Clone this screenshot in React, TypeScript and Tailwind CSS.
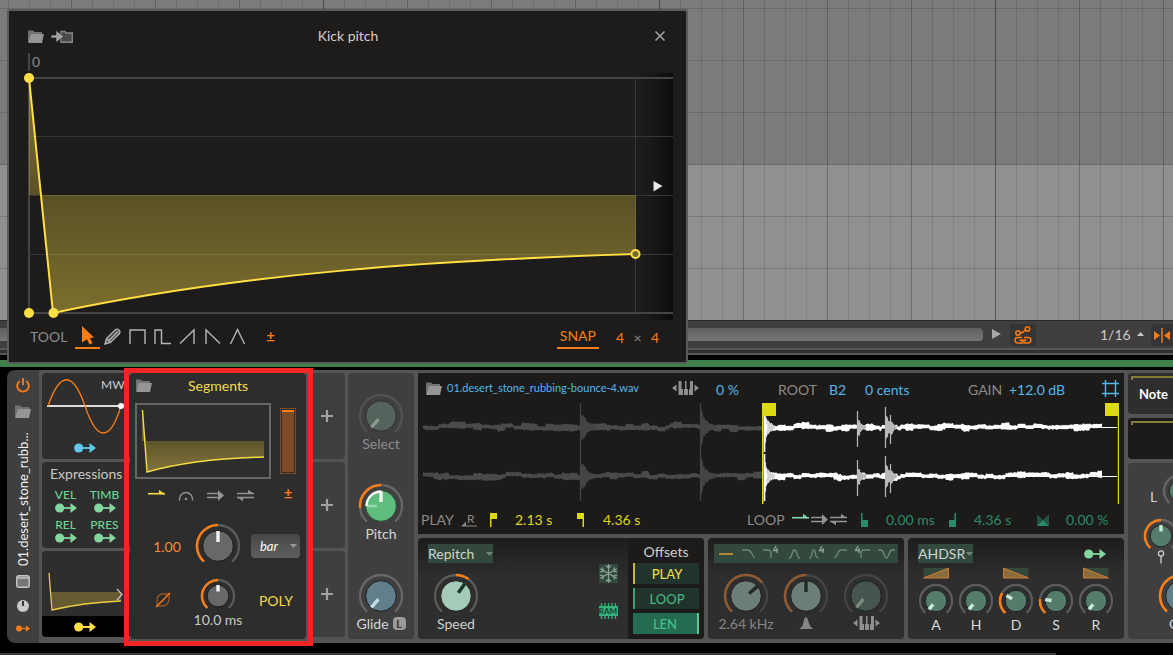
import type { ReactNode } from "react";

/* ---------- helpers ---------- */

function polar(c: number, r: number, deg: number) {
  const a = ((deg - 90) * Math.PI) / 180;
  return `${(c + r * Math.cos(a)).toFixed(2)} ${(c + r * Math.sin(a)).toFixed(2)}`;
}

function arc(c: number, r: number, from: number, to: number) {
  return `M${polar(c, r, from)}A${r} ${r} 0 ${to - from > 180 ? 1 : 0} 1 ${polar(c, r, to)}`;
}

// cheap repeatable noise, -1..1
function noise(n: number) {
  const v = Math.sin(n * 127.1 + 311.7) * 43758.5453;
  return (v - Math.floor(v)) * 2 - 1;
}

function wavePath(from: number, to: number, mid: number, seed: number) {
  const top: string[] = [];
  const bottom: string[] = [];
  for (let x = from; x <= to; x++) {
    const k = Math.floor(x / 8);
    const swell = noise(k + seed) * 1.1 + noise(Math.floor(x / 21) + seed * 3) * 1.1;
    const half = 1.5 + Math.abs(noise(x + seed * 7)) * 1 + (noise(k * 3 + seed) > 0.4 ? 1.3 : 0);
    top.push(`${x} ${(mid + swell - half).toFixed(1)}`);
    bottom.unshift(`${x} ${(mid + swell + half).toFixed(1)}`);
  }
  return `M${top.join("L")}L${bottom.join("L")}Z`;
}

// a transient: one or two full-height columns, then a ragged decay
function hitPath(x: number, mid: number, up: number, down: number, length: number) {
  let d = "";
  for (let i = 0; i < length; i++) {
    const fall = i === 0 ? 1 : 0.85 * Math.exp(-i / (length / 2.4)) * (0.6 + 0.4 * Math.abs(noise(x + i)));
    d += `M${x + i + 0.5} ${(mid - up * fall).toFixed(1)}V${(mid + down * fall).toFixed(1)}`;
  }
  return d;
}

/* ---------- icons ---------- */

function FolderIcon() {
  return (
    <svg width="16" height="13" viewBox="0 0 16 13">
      <path d="M0 .5h5l1.500 1.500H14V4.500H4L1 12H0z" fill="#717171" />
      <path d="M2.800 4h13.200L14 13H.3z" fill="#959595" />
    </svg>
  );
}

function LinkArrow({ color, small }: { color: string; small?: boolean }) {
  return (
    <svg width={small ? 14 : 22} height={small ? 7 : 10} viewBox="0 0 22 10">
      <circle cx="4.700" cy="5" r="4.600" fill={color} />
      <path d="M8 5h9" stroke={color} strokeWidth="1.800" />
      <path d="M15.500 0L22 5l-6.500 5z" fill={color} />
    </svg>
  );
}

function OneShotIcon({ color }: { color: string }) {
  return (
    <svg width="17" height="13" viewBox="0 0 17 13">
      <path d="M0 4.700h17" stroke={color} strokeWidth="1.600" />
      <path d="M11 .8l6 4.500h-6z" fill={color} />
    </svg>
  );
}

function HoldIcon() {
  return (
    <svg width="16" height="13" viewBox="0 0 16 13" fill="none">
      <path d="M1.500 11.500V10a6.500 6.500 0 0 1 13 0v1.500" stroke="#949494" strokeWidth="1.400" />
      <circle cx="8" cy="10" r="1.300" fill="#949494" />
    </svg>
  );
}

function LoopIcon() {
  return (
    <svg width="17" height="13" viewBox="0 0 17 13">
      <path d="M0 4.500h13M0 8.500h13" stroke="#949494" strokeWidth="1.400" />
      <path d="M11 1l6 5.500-6 5.500z" fill="#949494" />
    </svg>
  );
}

function PingPongIcon() {
  return (
    <svg width="17" height="13" viewBox="0 0 17 13" fill="#949494">
      <path d="M0 4.500h17M0 8.500h17" stroke="#949494" strokeWidth="1.400" />
      <path d="M11 .8l6 4.200h-6zM6 12.200L0 8h6z" />
    </svg>
  );
}

function KeysIcon() {
  return (
    <svg width="27" height="14" viewBox="0 0 27 14" fill="#8f8f8f">
      <path d="M4.500 3.500v7L0 7zM22.500 3.500v7L27 7z" />
      <path d="M6.500 0h3v8h1.500v6H6.500zM12 8h1V0h1.500v8h1.500v6H12zM17 8h1V0h3v14H17z" />
    </svg>
  );
}

function FlagIcon({ color, side }: { color: string; side: "left" | "right" }) {
  return (
    <svg width="7" height="14" viewBox="0 0 7 14" fill={color}>
      {side === "left" ? <path d="M0 0h7v6H1.500v8H0z" /> : <path d="M7 0H0v6h5.500v8H7z" />}
    </svg>
  );
}

function LoopFlagIcon({ side }: { side: "left" | "right" }) {
  return (
    <svg width="7" height="14" viewBox="0 0 7 14" fill="#2a8a6a">
      {side === "left" ? <path d="M0 0h1.500v7H7v7H0z" /> : <path d="M7 0H5.500v7H0v7h7z" />}
    </svg>
  );
}

function Triangle({ dir, color = "#9a9a9a" }: { dir: "up" | "down"; color?: string }) {
  return (
    <svg width="7" height="4" viewBox="0 0 7 4" fill={color} className="shrink-0">
      {dir === "up" ? <path d="M0 4h7L3.500 0z" /> : <path d="M0 0h7L3.500 4z" />}
    </svg>
  );
}

/* ---------- knob ---------- */

type KnobProps = {
  label: string;
  caption?: ReactNode;
  size?: "lg" | "sm";
  disc: string;
  edge?: string;
  pointer?: string;
  angle: number;
  range?: [number, number];
  ring?: string;
  accent?: string;
  className?: string;
  children?: ReactNode;
};

function Knob({
  label,
  caption,
  size = "lg",
  disc,
  edge = "#1f1f1f",
  pointer = "#f2f2f2",
  angle,
  range,
  ring = "#5a5a5a",
  accent = "#f97d17",
  className = "",
  children,
}: KnobProps) {
  const lg = size === "lg";
  const c = lg ? 24 : 18;
  const r = lg ? 21 : 16;
  return (
    <label className={`relative flex flex-col items-center ${className}`}>
      <svg width={c * 2} height={lg ? 42 : 32} viewBox={`0 0 ${c * 2} ${lg ? 42 : 32}`} fill="none" className="shrink-0">
        <path d={arc(c, r, -138, 138)} stroke={ring} strokeWidth="2.300" />
        {range && <path d={arc(c, r, range[0], range[1])} stroke={accent} strokeWidth="2.500" />}
        <circle cx={c} cy={c} r={lg ? 15.3 : 10.8} fill={disc} stroke={edge} strokeWidth="1" />
        <path d={`M${polar(c, lg ? 4 : 4.5, angle)}L${polar(c, lg ? 15 : 11, angle)}`} stroke={pointer} strokeWidth="3.400" />
        {children}
      </svg>
      {caption && <span className="flex h-[18px] items-center gap-1 whitespace-nowrap text-[14px]">{caption}</span>}
      <input type="range" aria-label={label} className="absolute inset-0 h-full w-full opacity-0" />
    </label>
  );
}

/* ---------- envelope editor window ---------- */

const CURVE = "M20 5L44 240C238 199 433 187 627 181";

function ShapeTool({ label, d }: { label: string; d: string }) {
  return (
    <button aria-label={label} className="flex h-[25px] w-[25px] items-center justify-center">
      <svg width="17" height="17" viewBox="0 0 17 17" fill="none" stroke="#b5b5b5" strokeWidth="1.400">
        <path d={d} />
      </svg>
    </button>
  );
}

function EnvelopeWindow() {
  return (
    <section className="absolute left-[7px] top-[9px] z-10 w-[681px] rounded-[3px] border-2 border-[#5b5b5b] bg-[#1d1c1b]">
      <header className="flex h-[42px] items-center pl-[19px] pr-[21px] pt-2">
        <button aria-label="Open preset" className="w-[23px]"><FolderIcon /></button>
        <button aria-label="Import" className="w-6">
          <svg width="22" height="13" viewBox="0 0 22 13">
            <path d="M10 1.500h4l1 1.500h6.300v9.300H10z" fill="#4a4a4a" stroke="#858585" strokeWidth="1.400" />
            <path d="M0 5h5V.5l8 6-8 6V8H0z" fill="#a0a0a0" stroke="#1d1c1b" strokeWidth=".6" />
          </svg>
        </button>
        <h2 className="flex-1 pr-6 text-center text-[14px] leading-5 text-[#d0d0d0]">Kick pitch</h2>
        <button aria-label="Close" className="flex w-5 justify-end">
          <svg width="10" height="10" viewBox="0 0 10 10" stroke="#a5a5a5" strokeWidth="1.500">
            <path d="M.5.5l9 9M9.500.5l-9 9" />
          </svg>
        </button>
      </header>

      <div className="flex h-5 items-start pl-[19px]">
        <div className="h-[18px] border-l-2 border-[#444] pl-[2px] text-[14px] leading-[18px] text-[#8a8a8a]">0</div>
      </div>
      <svg width="677" height="247" viewBox="0 0 677 247" fill="none" className="block">
        <defs>
          <linearGradient id="fill-env" x1="0" y1="5" x2="0" y2="240" gradientUnits="userSpaceOnUse">
            <stop offset="0" stopColor="#ffdf45" stopOpacity=".45" />
            <stop offset=".5" stopColor="#ffdf45" stopOpacity=".27" />
            <stop offset="1" stopColor="#ffdf45" stopOpacity=".42" />
          </linearGradient>
          <linearGradient id="edge-shade">
            <stop offset="0" stopColor="#101012" stopOpacity="0" />
            <stop offset="1" stopColor="#0a0a0a" stopOpacity=".9" />
          </linearGradient>
        </defs>
        <rect x="632" y="0" width="32" height="247" fill="url(#edge-shade)" />
        <path d="M20 5h644M20 240h644M20 5v235" stroke="#464546" strokeWidth="2" />
        <path d="M20 63.500h644M20 122.500h644M20 181.500h644M626.500 5v235" stroke="#383738" />
        <path d={`${CURVE}V122H20Z`} fill="url(#fill-env)" fillRule="evenodd" />
        <path d={CURVE} stroke="#ffdf45" strokeWidth="2" />
        <circle cx="20" cy="5" r="5" fill="#ffdf45" />
        <circle cx="20" cy="240" r="5" fill="#ffdf45" />
        <circle cx="44.500" cy="240" r="5" fill="#ffdf45" />
        <circle cx="626.500" cy="181" r="4" fill="#75682f" stroke="#ffdf45" strokeWidth="2" />
        <path d="M644.500 108l9 5-9 5.500z" fill="#e8e8e8" />
      </svg>

      <footer className="flex h-[42px] items-start pl-[21px] pt-1 text-[14px] text-[#8c8c8c]">
        <span className="w-[45px] leading-[25px]">TOOL</span>
        <button aria-label="Select tool" className="flex h-[25px] w-[25px] items-center justify-center border-b-2 border-[#f97d17]">
          <svg width="12" height="19" viewBox="0 0 12 19" fill="#f97d17">
            <path d="M0 0l12 11.500-4 .5 2.500 5.200L7.500 18.600 5 13.200 0 16.500z" />
          </svg>
        </button>
        <button aria-label="Pencil tool" className="flex h-[25px] w-[25px] items-center justify-center">
          <svg width="17" height="17" viewBox="0 0 17 17" fill="#4c4c4c" stroke="#b5b5b5" strokeWidth="1.300">
            <path d="M1 16l1.500-5.500L11.500 1.500q2-1 3.500.5t.5 3.500L6.500 14.500zM2.500 10.500l4 4M5 12.500l9-9" />
          </svg>
        </button>
        <ShapeTool label="Square" d="M1 16V2h15v14" />
        <ShapeTool label="Pulse" d="M1 16V2h6.500v13.500H17" />
        <ShapeTool label="Saw up" d="M1 15.500L15 2v14" />
        <ShapeTool label="Saw down" d="M2 16V2l14 13.500" />
        <ShapeTool label="Triangle" d="M1.500 16L8.500 1.500 15.500 16" />
        <button className="ml-2 h-6 w-[25px] text-[15px] font-bold text-[#f97d17]">±</button>
        <button className="ml-auto mr-[17px] h-[25px] border-b-2 border-[#f97d17] px-[3px] text-[#f97d17]">SNAP</button>
        <span className="mr-[27px] flex w-[43px] justify-between leading-[27px]">
          <b className="font-normal text-[#f97d17]">4</b>×<b className="font-normal text-[#f97d17]">4</b>
        </span>
      </footer>
    </section>
  );
}

/* ---------- arranger ---------- */

function Arranger() {
  return (
    <div className="relative min-h-[320px] flex-1">
      <svg className="absolute inset-0 h-full w-full">
        <defs>
          <pattern id="beats" width="336" height="52" patternUnits="userSpaceOnUse" x="323" y="8">
            <path
              d="M21.500 0v52M42.500 0v52M63.500 0v52M105.500 0v52M126.500 0v52M147.500 0v52M189.500 0v52M210.500 0v52M231.500 0v52M273.500 0v52M294.500 0v52M315.500 0v52"
              stroke="#000"
              strokeOpacity=".1"
            />
            <path d="M84.500 0v52M168.500 0v52M252.500 0v52" stroke="#000" strokeOpacity=".24" />
            <path d="M.5 0v52" stroke="#000" strokeOpacity=".4" />
            <path d="M0 .5h336" stroke="#000" strokeOpacity=".14" />
          </pattern>
        </defs>
        <rect width="100%" height="100%" fill="#918f90" />
        <rect width="100%" height="165" fill="#7b7b7b" />
        <rect width="100%" height="100%" fill="url(#beats)" />
      </svg>
    </div>
  );
}

function ArrangerBar() {
  return (
    <div className="flex h-[30px] items-start overflow-hidden border-b-2 border-t border-b-[#575757] border-t-[#2b2b2b] bg-[#403e3f] text-[14px] text-[#c9c9c9]">
      <div className="mt-[7px] h-[13px] flex-1 rounded-r bg-linear-to-b from-[#5e5e5e] to-[#777]" />
      <button aria-label="Scroll right" className="ml-[9px] mt-[8px]">
        <svg width="9" height="10" viewBox="0 0 9 10" fill="#a8a8a8"><path d="M0 0l9 5-9 5z" /></svg>
      </button>
      <button aria-label="Follow automation" className="ml-[9px] mt-[3px] flex h-[22px] w-[26px] items-center justify-center rounded bg-[#353334]">
        <svg width="18" height="18" viewBox="0 0 18 18" fill="none" stroke="#f97d17" strokeWidth="1.500">
          <circle cx="4" cy="7" r="2.200" />
          <circle cx="13.500" cy="3" r="2.200" />
          <path d="M6 6.500q2 1 3.500-.8t2-2.200M8 11.500H3.800a2.700 2.700 0 0 0 0 5.400H8v-2M10 11.500h4.200a2.700 2.700 0 0 1 0 5.400H10v-2M5.500 14.200h7" />
        </svg>
      </button>
      <label className="ml-16 mt-[3px] flex h-5 w-[51px] items-center">
        <select aria-label="Grid" className="w-[37px] appearance-none bg-transparent text-[14px] outline-none">
          <option>1/16</option>
        </select>
        <Triangle dir="up" color="#c9c9c9" />
      </label>
      <button aria-label="Snap" className="mt-[3px] flex h-[22px] w-[22px] items-center justify-center rounded-l bg-[#353334]">
        <svg width="16" height="15" viewBox="0 0 16 15" fill="#f97d17">
          <path d="M0 3l6 4.500L0 12zM16 3l-6 4.500L16 12zM7.300 0h1.400v15H7.300z" />
        </svg>
      </button>
    </div>
  );
}

/* ---------- device: left side ---------- */

function DeviceHeader() {
  return (
    <div className="flex w-8 shrink-0 flex-col items-center rounded-l-lg bg-[#403f40]">
      <button aria-label="Power" className="mt-2">
        <svg width="14" height="15" viewBox="0 0 14 15" fill="none" stroke="#f97d17" strokeWidth="1.900">
          <path d="M7 0v7M3.800 3a5.800 5.800 0 1 0 6.400 0" />
        </svg>
      </button>
      <button aria-label="Browse" className="mt-3"><FolderIcon /></button>
      <span className="mt-[14px] h-[134px] rotate-180 whitespace-nowrap text-[13px] leading-5 text-[#f0f0f0] [writing-mode:vertical-rl]">
        01.desert_stone_rubb...
      </span>
      <button aria-label="Expand" className="mt-[9px]">
        <svg width="14" height="13" viewBox="0 0 14 13" fill="none">
          <rect x=".8" y=".8" width="12.400" height="11.400" rx="2" fill="#767676" stroke="#c4c4c4" strokeWidth="1.500" />
          <path d="M1 3h12" stroke="#c4c4c4" strokeWidth="1.500" />
        </svg>
      </button>
      <button aria-label="Remote controls" className="mt-[12px]">
        <svg width="12" height="12" viewBox="0 0 12 12">
          <circle cx="6" cy="6" r="6" fill="#c9c9c9" />
          <path d="M6 1v5" stroke="#3a3a3a" strokeWidth="2" />
        </svg>
      </button>
      <button aria-label="Modulators" className="mt-[13px]"><LinkArrow color="#f97d17" small /></button>
    </div>
  );
}

const EXPRESSIONS = ["VEL", "TIMB", "REL", "PRES"];

function Modulators() {
  return (
    <div className="flex w-[88px] shrink-0 flex-col gap-[3px]">
      <div className="relative h-[86px] rounded bg-[#2e2e2e]">
        <svg width="88" height="66" viewBox="0 0 88 66" fill="none" className="block">
          <path d="M5 33h75" stroke="#dcdcdc" strokeWidth="1.800" />
          <path d="M6 33C18-2 31-2 43 33C55 69 68 69 79 33" stroke="#f97d17" strokeWidth="1.300" />
          <circle cx="79" cy="33" r="3" fill="#fff" />
        </svg>
        <span className="absolute left-[59px] top-1 text-[12px] leading-4 text-[#d0d0d0]">MW</span>
        <button aria-label="Map MW" className="ml-8 mt-[4px] block"><LinkArrow color="#62c9ee" /></button>
      </div>
      <div className="h-[86px] rounded bg-[#2e2e2e] pt-[3px]">
        <h3 className="pl-2 text-[14px] leading-[18px] text-[#c9c9c9]">Expressions</h3>
        <div className="grid w-[82px] grid-cols-2 pl-1 pt-1">
          {EXPRESSIONS.map((name) => (
            <button key={name} className="flex h-[30px] flex-col items-center text-[12px] font-medium leading-4 text-[#6fd397]">
              {name}
              <LinkArrow color="#84d69f" />
            </button>
          ))}
        </div>
      </div>
      <div className="h-[86px] overflow-hidden rounded bg-[#2e2e2e]">
        <svg width="88" height="65" viewBox="0 0 88 65" fill="none" className="block">
          <path d="M9 41L10.500 59C35 53 55 52 79 50V41Z" fill="#655a30" />
          <path d="M7 22L10 59C35 53 55 51 79 50" stroke="#e9ce45" strokeWidth="1.300" />
          <path d="M75 38l5 5.500-5 5.500" stroke="#c5c5c5" strokeWidth="1.300" />
        </svg>
        <button aria-label="Map segments" className="flex h-[21px] w-full items-center bg-black pl-8"><LinkArrow color="#ffdf45" /></button>
      </div>
    </div>
  );
}

function SegmentsPanel() {
  return (
    <div className="relative w-[176px] shrink-0 rounded bg-[#2d2d2d]">
      <div className="pointer-events-none absolute -bottom-[7px] -left-[6px] -right-[7px] -top-[5px] z-10 border-[5px] border-[#f02524]" />
      <header className="flex h-6 items-center pl-[6px]">
        <button aria-label="Open preset"><FolderIcon /></button>
        <h3 className="flex-1 pr-[22px] text-center text-[14px] text-[#f4dc47]">Segments</h3>
      </header>
      <div className="flex items-center pl-[5px] pt-[6px]">
        <div className="h-[76px] w-[136px] border-2 border-[#676767]">
          <svg width="132" height="72" viewBox="0 0 132 72" fill="none" className="block">
            <defs>
              <linearGradient id="mini-env" x1="0" y1="0" x2="0" y2="1">
                <stop offset="0" stopColor="#5f552f" />
                <stop offset="1" stopColor="#82743a" />
              </linearGradient>
            </defs>
            <path d="M5 6L9 36H5Z" fill="#6a5f30" />
            <path d="M8 36L10 67C45 57 85 53 127 52V36Z" fill="url(#mini-env)" />
            <path d="M5.500 5L10 67C45 57 85 53 127 52" stroke="#f4dc47" strokeWidth="1.400" />
          </svg>
        </div>
        <label className="relative ml-[9px] h-[66px] w-4 border border-[#7c4c29] p-px">
          <span className="block h-full border-t-2 border-[#f97d17] bg-[#7c4c29]" />
          <input type="range" aria-label="Amount" className="absolute inset-0 h-full w-full opacity-0" />
        </label>
      </div>
      <div className="flex h-8 items-center pl-3 text-[15px] text-[#f97d17]">
        <button aria-label="One shot" className="flex w-[29px] justify-center"><OneShotIcon color="#f4dc47" /></button>
        <button aria-label="Hold" className="flex w-[29px] justify-center"><HoldIcon /></button>
        <button aria-label="Loop" className="flex w-[30px] justify-center"><LoopIcon /></button>
        <button aria-label="Ping-pong" className="flex w-[30px] justify-center"><PingPongIcon /></button>
        <button className="ml-[18px] w-5 pb-1 font-bold">±</button>
      </div>
      <div className="mt-[11px] flex h-12 items-center pl-2.5">
        <span className="flex-1 text-center text-[14px] text-[#f18d3c]">1.00</span>
        <Knob label="Time" disc="#686868" angle={0} range={[-138, 0]} className="h-12" />
        <div className="w-16">
          <label className="ml-[9px] flex h-6 w-[49px] items-center rounded bg-linear-to-b from-[#484848] to-[#5e5e5e]">
            <select aria-label="Time unit" className="w-[39px] appearance-none bg-transparent pl-[9px] pt-[2px] text-[13px] italic text-white outline-none">
              <option>bar</option>
            </select>
            <Triangle dir="down" />
          </label>
        </div>
      </div>
      <div className="mt-2 flex h-[52px] pl-2.5">
        <button aria-label="Phase" className="flex flex-1 items-center justify-center pb-2 pr-2">
          <svg width="16" height="16" viewBox="0 0 16 16" fill="none" stroke="#9c5626" strokeWidth="1.300">
            <path d="M2 13.500V7Q3 2 8.500 2H14v6Q13 14 7 14H2" />
            <path d="M1 15L15 1" stroke="#f97d17" strokeWidth="1.500" />
          </svg>
        </button>
        <Knob
          label="Smoothing"
          size="sm"
          disc="#686868"
          angle={0}
          range={[-138, 0]}
          className="w-12"
          caption={<span className="text-[#c9c9c9]">10.0 ms</span>}
        />
        <button className="h-[44px] w-16 pl-1 text-[14px] text-[#f4dc47]">POLY</button>
      </div>
    </div>
  );
}

function EmptySlots() {
  return (
    <div className="flex w-9 shrink-0 flex-col gap-[3px]">
      {[0, 1, 2].map((i) => (
        <button key={i} aria-label="Add modulator" className="flex h-[86px] items-center justify-center rounded bg-[#403f40]">
          <svg width="12" height="12" viewBox="0 0 12 12" stroke="#a2a2a2" strokeWidth="2.200">
            <path d="M6 0v12M0 6h12" />
          </svg>
        </button>
      ))}
    </div>
  );
}

function MacroKnobs() {
  return (
    <div className="flex w-[66px] shrink-0 flex-col gap-[30px] rounded bg-[#403f40] pt-[19px] text-[#d5d5d5]">
      <Knob
        label="Select"
        disc="#56625c"
        pointer="#8b988f"
        angle={-140}
        ring="#525152"
        edge="#2b2d2c"
        caption={<span className="text-[#8d8d8d]">Select</span>}
      />
      <Knob label="Pitch" disc="#60bd80" edge="#2e5a3e" angle={0} range={[-95, 0]} ring="#666" caption="Pitch">
        <path d="M20 24H10" stroke="#9bd8ae" strokeWidth="2.500" />
        <path d={arc(24, 14.5, -90, 0)} stroke="#fff" strokeWidth="2.300" />
      </Knob>
      <Knob
        label="Glide"
        disc="#607f8a"
        pointer="#c3dfe6"
        angle={-140}
        ring="#666"
        caption={
          <>
            Glide
            <kbd className="flex h-[13px] w-[13px] items-center justify-center rounded bg-[#9b9b9b] font-sans text-[11px] font-bold leading-none text-[#403f40]">L</kbd>
          </>
        }
      />
    </div>
  );
}

/* ---------- device: sampler ---------- */

const GREY_HITS = [162, 282];
const WHITE_HITS = [
  { x: 439, up: 16, down: 20, length: 9 },
  { x: 467, up: 20, down: 21, length: 10 },
  { x: 472, up: 12, down: 17, length: 7 },
];
const CHANNELS = [24, 73];

function Waveform() {
  return (
    <svg width="100%" height="101" viewBox="0 0 706 101" preserveAspectRatio="none" className="block">
      {CHANNELS.map((mid) => (
        <g key={mid}>
          <path d={wavePath(5, 344, mid, mid)} fill="#4b4a4a" />
          {GREY_HITS.map((x) => (
            <path key={x} d={hitPath(x, mid, 24, 25, 16)} stroke="#454444" strokeWidth="1.200" />
          ))}
          <path d={wavePath(346, 684, mid, mid + 2)} fill="#fff" />
          <path d={`M346 ${mid}.5H699`} stroke="#fff" />
          {WHITE_HITS.map((hit) => (
            <path key={hit.x} d={hitPath(hit.x, mid, hit.up, hit.down, hit.length)} stroke="#b9b8b8" strokeWidth="1.200" />
          ))}
          <path d={hitPath(346, mid, 22, 25, 11)} stroke="#d4d4d4" strokeWidth="1.200" />
          <path d={hitPath(346, mid, 22, 25, 3)} stroke="#fff" strokeWidth="1.600" />
        </g>
      ))}
      <path d="M344 0h14v13h-12.500v88H344z" fill="#dcda10" />
      <path d="M687 0h14v101h-1.200V13H687z" fill="#dcda10" />
    </svg>
  );
}

function SamplerDisplay() {
  return (
    <div className="overflow-hidden bg-[#1c1b1a] text-[14px] text-[#8c8a88]">
      <div className="flex h-[30px] items-center whitespace-nowrap pl-2 pr-[5px] *:shrink-0">
        <button aria-label="Open sample" className="w-[21px]"><FolderIcon /></button>
        <span className="w-[225px] text-[11px] text-[#55b7e8]">01.desert_stone_rubbing-bounce-4.wav</span>
        <span className="w-11"><KeysIcon /></span>
        <span className="w-[62px] pt-0.5 text-[#55b7e8]">0 %</span>
        <span className="w-[51px] pt-0.5">ROOT</span>
        <span className="w-9 pt-0.5 text-[#55b7e8]">B2</span>
        <span className="w-[103px] pt-0.5 text-[#55b7e8]">0 cents</span>
        <span className="w-[41px] pt-0.5">GAIN</span>
        <span className="pt-0.5 text-[#55b7e8]">+12.0 dB</span>
        <button aria-label="Zoom to fit" className="ml-auto">
          <svg width="17" height="17" viewBox="0 0 17 17" stroke="#55b7e8" strokeWidth="1.400">
            <path d="M3.500 0v17M13.500 0v17M0 3.500h17M0 13.500h17" />
          </svg>
        </button>
      </div>
      <Waveform />
      <div className="flex h-[30px] items-center whitespace-nowrap pb-px pl-[3px] pt-0.5 *:shrink-0">
        <span className="w-10">PLAY</span>
        <button aria-label="Reverse" className="relative flex h-[15px] w-[29px] items-start pl-[6px] text-[12px] leading-[13px]">
          R
          <svg width="16" height="6" viewBox="0 0 16 6" fill="#8c8a88" className="absolute bottom-0 left-0">
            <path d="M0 5.500L5 .5v4h11v1z" />
          </svg>
        </button>
        <span className="w-[25px]"><FlagIcon color="#dcda10" side="left" /></span>
        <span className="w-[62px] text-[#dcda10]">2.13 s</span>
        <span className="w-[26px]"><FlagIcon color="#dcda10" side="right" /></span>
        <span className="w-36 text-[#dcda10]">4.36 s</span>
        <span className="w-[45px]">LOOP</span>
        <span className="flex w-[69px] gap-[2px] pb-px">
          <button aria-label="Loop off"><OneShotIcon color="#84d6b0" /></button>
          <button aria-label="Loop forward"><LoopIcon /></button>
          <button aria-label="Loop ping-pong"><PingPongIcon /></button>
        </span>
        <span className="w-[25px]"><LoopFlagIcon side="left" /></span>
        <span className="w-[63px] text-[#2a8a6a]">0.00 ms</span>
        <span className="w-[25px]"><LoopFlagIcon side="right" /></span>
        <span className="w-[63px] text-[#2a8a6a]">4.36 s</span>
        <span className="w-[29px]">
          <svg width="12" height="12" viewBox="0 0 12 12" fill="#2a8a6a">
            <path d="M0 0l6 6-6 6zM12 0L6 6l6 6z" opacity=".5" />
            <path d="M6 6l6 6H0z" />
          </svg>
        </span>
        <span className="text-[#2a8a6a]">0.00 %</span>
      </div>
    </div>
  );
}

const OFFSETS = [
  { name: "PLAY", style: "border-l-2 border-[#c9b93c] bg-[#22332c] text-[#e9dc4a]" },
  { name: "LOOP", style: "border-l-2 border-[#3aa578] bg-[#22332c] text-[#46b585]" },
  { name: "LEN", style: "border-r-2 border-[#5cc796] bg-[#246b52] text-[#46c08d]" },
];

function SpeedPanel() {
  return (
    <div className="flex min-w-[286px] flex-[286] overflow-hidden rounded bg-linear-to-b from-[#1e1d1d] to-[#2e2e2e] to-40%">
      <div className="pl-2.5 pt-1.5">
        <label className="flex h-[19px] w-[65px] items-center bg-[#33493e]">
          <select aria-label="Playback mode" className="w-[58px] appearance-none bg-transparent text-[14px] text-[#cfd4d0] outline-none">
            <option>Repitch</option>
          </select>
          <Triangle dir="down" color="#6f8579" />
        </label>
        <Knob
          label="Speed"
          disc="#a3cbb7"
          pointer="#163528"
          angle={36}
          range={[0, 36]}
          className="mt-[9px] w-14"
          caption={<span className="text-[#d0d0d0]">Speed</span>}
        />
      </div>
      <div className="ml-auto flex w-[29px] flex-col gap-5 pt-[26px]">
        <button aria-label="Freeze" className="h-[19px] w-[19px] bg-[#33493e]">
          <svg width="19" height="19" viewBox="0 0 19 19" fill="none" stroke="#8fa699" strokeWidth="1.100">
            <path d="M9.500 0v19M1.200 4.700l16.600 9.600M1.200 14.300l16.600-9.600M7 1.500l2.500 2.500L12 1.500M7 17.500L9.500 15l2.500 2.500M1 8l3.400-1L3.500 3.500M18 11l-3.400 1 .9 3.500M1 11l3.400 1-.9 3.500M18 8l-3.400-1 .9-3.500" />
          </svg>
        </button>
        <button aria-label="Load into memory" className="relative h-4 w-[19px] text-center text-[8px] font-bold leading-4 text-[#173a2c]">
          <svg width="19" height="16" viewBox="0 0 19 16" className="absolute inset-0">
            <path d="M0 3h19v10H0z" fill="#35b07e" />
            <path d="M2.500 0v16M6 0v16M9.500 0v16M13 0v16M16.500 0v16" stroke="#35b07e" strokeWidth="1.300" />
          </svg>
          <span className="relative -ml-px">RAM</span>
        </button>
      </div>
      <div className="flex w-[76px] flex-col gap-1 bg-[#1c1b1a] px-[5px] pt-1 text-[14px]">
        <h3 className="h-[17px] text-center leading-5 text-[#cfcfcf]">Offsets</h3>
        {OFFSETS.map((o) => (
          <button key={o.name} className={`h-[21px] text-[13px] font-medium leading-[23px] ${o.style}`}>{o.name}</button>
        ))}
      </div>
    </div>
  );
}

const FILTERS = [
  { name: "Low-pass", d: "M2 5h6q2 0 3.500 3l3 5" },
  { name: "Low-pass 4", d: "M0 5h5q2.500 0 3 3v5", four: 10 },
  { name: "Band-pass", d: "M3 13q2 0 3-4t2.500-4 2.500 4 3 4" },
  { name: "Band-pass 4", d: "M0 13q2.500 0 3-4t1.800-4 1.800 4 3 4", four: 10 },
  { name: "High-pass", d: "M2 13q2.500-1 4-5 1-3 3-3h6" },
  { name: "High-pass 4", d: "M6 13V8q.5-3 3-3h6", four: 0 },
  { name: "Notch", d: "M0 5h3q1.500 0 3 4t2.500 4 2.500-4 3-4h3" },
];

function FilterPanel() {
  return (
    <div className="min-w-[196px] flex-[196] rounded bg-linear-to-b from-[#1e1d1d] to-[#2e2e2e] to-40% px-1.5 pt-1.5 text-[#858585]">
      <div className="grid h-[19px] grid-cols-8 items-center justify-items-center bg-[#33493e]">
        <button aria-label="Filter off" className="h-0.5 w-[14px] bg-[#b58435]" />
        {FILTERS.map((f) => (
          <button key={f.name} aria-label={f.name}>
            <svg width="17" height="17" viewBox="0 0 17 17" fill="none" stroke="#70877b" strokeWidth="1.300">
              <path d={f.d} />
              {f.four !== undefined && <path d={`M${f.four + 3} 1l-2.500 4.500h4.500M${f.four + 4} 3v5`} stroke="#8fa699" />}
            </svg>
          </button>
        ))}
      </div>
      <div className="mx-[2px] mt-[9px] grid grid-cols-3">
        <Knob label="Cutoff" disc="#6d7e76" pointer="#1f2a25" angle={50} range={[-138, 50]} ring="#444" accent="#915a30" caption="2.64 kHz" />
        <Knob
          label="Resonance"
          disc="#6d7e76"
          pointer="#1f2a25"
          angle={0}
          range={[-138, 0]}
          ring="#444"
          accent="#915a30"
          caption={
            <svg width="14" height="12" viewBox="0 0 14 12" fill="#858585">
              <path d="M0 12q3.500-1.500 4.500-7T7 0t2.500 5 4.500 7z" />
            </svg>
          }
        />
        <Knob label="Key tracking" disc="#46564e" pointer="#7c8a82" angle={-140} ring="#444" caption={<KeysIcon />} />
      </div>
    </div>
  );
}

const STAGES = [
  { name: "A", angle: -140, shape: "up" },
  { name: "H", angle: -140 },
  { name: "D", angle: -60, shape: "down", range: [-138, -60] as [number, number] },
  { name: "S", angle: -83, range: [-138, -83] as [number, number] },
  { name: "R", angle: -140, shape: "down" },
];

function EnvelopePanel() {
  return (
    <div className="min-w-[216px] flex-[216] rounded bg-linear-to-b from-[#1e1d1d] to-[#2e2e2e] to-40% pt-1.5">
      <div className="flex h-[19px] items-center justify-between pl-2.5 pr-[18px]">
        <label className="flex h-[19px] w-[55px] items-center bg-[#33493e]">
          <select aria-label="Envelope type" className="w-[48px] appearance-none bg-transparent text-[14px] text-[#cfd4d0] outline-none">
            <option>AHDSR</option>
          </select>
          <Triangle dir="down" color="#6f8579" />
        </label>
        <button aria-label="Map envelope"><LinkArrow color="#84d69f" /></button>
      </div>
      <div className="mx-2 mt-1 grid grid-cols-5">
        {STAGES.map((s) => (
          <div key={s.name} className="flex flex-col items-center">
            <svg width="26" height="12" viewBox="0 0 26 12" className="mb-[4px]">
              {s.shape && <path d="M.5 1h25v10H.5z" fill="#33493e" />}
              {s.shape === "up" && <path d="M.5 11L25.500 1v10z" fill="#8b6c3c" stroke="#cf7c33" />}
              {s.shape === "down" && <path d="M.5 11V1l25 10z" fill="#8b6c3c" stroke="#cf7c33" />}
            </svg>
            <Knob
              label={s.name}
              size="sm"
              disc="#557b69"
              pointer="#c5ead6"
              angle={s.angle}
              range={s.range}
              caption={<span className="text-[#dcdcdc]">{s.name}</span>}
            />
          </div>
        ))}
      </div>
    </div>
  );
}

function OutputColumn() {
  return (
    <div className="flex w-[45px] shrink-0 flex-col gap-1 overflow-hidden">
      <div className="h-[41px] rounded-l bg-[#2e2e2e] pl-[3px] pt-[3px]">
        <div className="h-1 border-l-2 border-t-2 border-[#857c3a]" />
        <h3 className="pl-2 text-[13px] font-bold leading-[28px] text-white">Note</h3>
      </div>
      <div className="h-[41px] rounded-l bg-[#1c1b1a] pl-[3px] pt-[3px]">
        <div className="h-1 border-l-2 border-t-2 border-[#857c3a]" />
      </div>
      <div className="flex-1 rounded-l bg-[#403f40] pt-[10px] text-[14px] text-[#d5d5d5]">
        <div className="flex h-[45px] w-24 items-start gap-[5px] pl-[22px]">
          <span className="pt-[13px]">L</span>
          <Knob label="Pan" size="sm" disc="#557b69" angle={0} ring="#666" />
        </div>
        <div className="flex w-24 flex-col pl-[15px]">
          <Knob label="Level" size="sm" disc="#557b69" pointer="#c5ead6" angle={0} range={[-138, 0]} ring="#666" className="w-9" />
          <svg width="36" height="14" viewBox="0 0 36 14" fill="none" stroke="#cfcfcf" strokeWidth="1.300">
            <circle cx="18" cy="3.500" r="2.600" />
            <path d="M18 6v7.500" />
          </svg>
        </div>
        <div className="w-24 pl-[29px] pt-[8px]">
          <Knob label="Out" disc="#607f8a" angle={0} range={[-138, 60]} ring="#666" className="w-12" caption="Out" />
        </div>
      </div>
    </div>
  );
}

export default function App() {
  return (
    <div className="relative flex min-h-screen flex-col overflow-hidden bg-black font-['Lato','Open_Sans',sans-serif]">
      <Arranger />
      <ArrangerBar />
      <div className="h-[5px] border-b-2 border-[#575757] bg-[#2f2f2f]" />
      <div className="mt-[5px] h-[7px] bg-[#40814b]" />
      <EnvelopeWindow />

      <main className="mt-[3px] flex pl-[7px]">
        <DeviceHeader />
        <div className="flex min-w-0 flex-1 bg-[#555455] pb-1 pl-[3px] pt-[3px]">
          <Modulators />
          <SegmentsPanel />
          <div className="ml-[3px] flex gap-[3px]">
            <EmptySlots />
            <MacroKnobs />
          </div>
          <div className="mx-1 flex min-w-0 flex-1 flex-col gap-1">
            <SamplerDisplay />
            <div className="flex h-[101px] gap-1">
              <SpeedPanel />
              <FilterPanel />
              <EnvelopePanel />
            </div>
          </div>
          <OutputColumn />
        </div>
      </main>
      <div className="mt-[10px] h-[2px] w-[90%] bg-[#3a393a]" />
    </div>
  );
}
